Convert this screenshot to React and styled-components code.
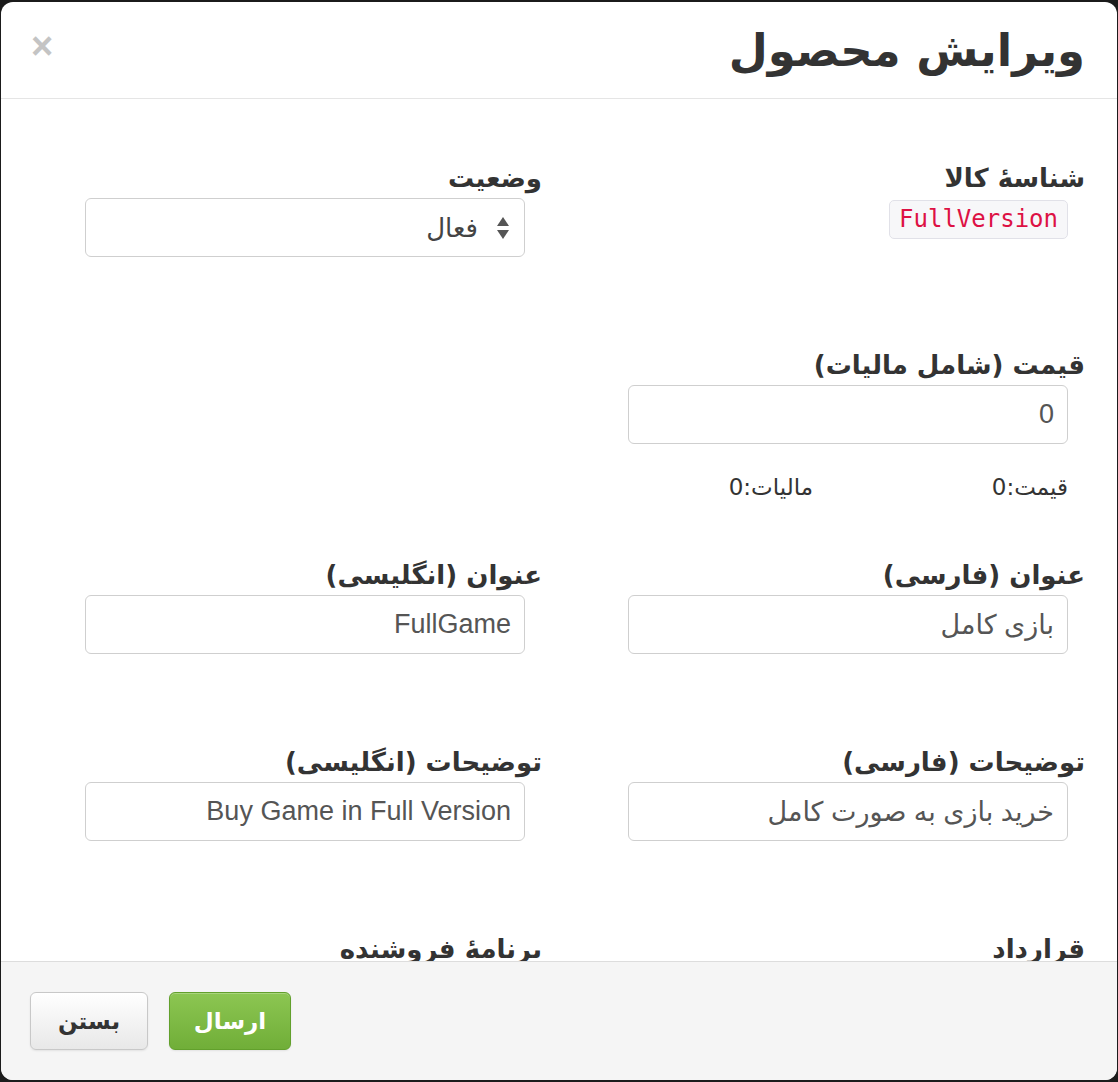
import styled, { createGlobalStyle } from "styled-components";

const GlobalStyle = createGlobalStyle`
  html, body {
    margin: 0;
    padding: 0;
    height: 1082px;
    overflow: hidden;
    background: #1b1b1b;
  }
  * {
    box-sizing: border-box;
  }
`;

const Modal = styled.div`
  margin: 2px 1px;
  height: 1078px;
  display: flex;
  flex-direction: column;
  background: #fff;
  border-radius: 12px;
  overflow: hidden;
  direction: rtl;
  font-family: "DejaVu Sans", sans-serif;
  color: #333;
`;

const Header = styled.div`
  height: 97px;
  flex-shrink: 0;
  display: flex;
  align-items: center;
  justify-content: space-between;
  padding: 0 32px 0 30px;
  border-bottom: 1px solid #e5e5e5;
`;

const Title = styled.h3`
  margin: 0;
  font-size: 45px;
  font-weight: bold;
  color: #333;
  line-height: 1;
`;

const Close = styled.span`
  font-family: "Liberation Sans", sans-serif;
  font-size: 38px;
  font-weight: bold;
  color: #c4c4c4;
  line-height: 1;
  margin-top: -8px;
`;

const Body = styled.div`
  flex: 1;
  overflow: hidden;
  padding: 64px 32px 0 0;
`;

const Row = styled.div`
  display: grid;
  grid-template-columns: 543px 542px;
  margin-bottom: ${(p) => p.$gap}px;
`;

const Field = styled.div`
  display: flex;
  flex-direction: column;
  align-items: flex-start;
`;

const Label = styled.label`
  font-size: 26px;
  font-weight: bold;
  line-height: 30px;
  margin-bottom: 5px;
`;

const Content = styled.div`
  margin-right: 17px;
  width: 440px;
`;

const Code = styled.code`
  display: inline-block;
  margin-top: 2px;
  padding: 0 9px;
  height: 39px;
  line-height: 37px;
  font-family: "DejaVu Sans Mono", monospace;
  font-size: 24px;
  color: #d14;
  background: #f7f7f9;
  border: 1px solid #e1e1e8;
  border-radius: 5px;
  direction: ltr;
`;

const Input = styled.div`
  height: 59px;
  width: 440px;
  display: flex;
  align-items: center;
  padding: 0 13px;
  border: 1.5px solid #cfcfcf;
  border-radius: 6px;
  font-family: "Liberation Sans", "DejaVu Sans", sans-serif;
  font-size: 27px;
  color: #555;
  background: #fff;
`;

const Select = styled(Input)`
  gap: 18px;
  padding-right: 14px;
  font-family: "DejaVu Sans", sans-serif;
  font-size: 26px;
  color: #444;
`;

const Help = styled.div`
  display: flex;
  margin-top: 28px;
  font-family: "DejaVu Sans", sans-serif;
  font-size: 23px;
  line-height: 30px;
  color: #333;
`;

const HelpItem = styled.span`
  width: ${(p) => p.$w || "auto"};
`;

const Footer = styled.div`
  height: 119px;
  flex-shrink: 0;
  display: flex;
  align-items: center;
  justify-content: flex-end;
  gap: 21px;
  padding: 0 29px 0 29px;
  background: #f5f5f5;
  border-top: 1px solid #ddd;
`;

const Button = styled.button`
  height: 58px;
  width: ${(p) => p.$w}px;
  border-radius: 6px;
  font-family: "DejaVu Sans", sans-serif;
  font-size: 23px;
  font-weight: bold;
  cursor: pointer;
  color: ${(p) => (p.$primary ? "#fff" : "#333")};
  border: 1px solid ${(p) => (p.$primary ? "#62a02c" : "#c8c8c8")};
  background: ${(p) =>
    p.$primary
      ? "linear-gradient(#8cc652, #70ae38)"
      : "linear-gradient(#ffffff, #e8e8e8)"};
  box-shadow: inset 0 1px 0 rgba(255, 255, 255, 0.25), 0 1px 2px rgba(0, 0, 0, 0.08);
`;

const Arrows = () => (
  <svg width="14" height="24" viewBox="0 0 14 24">
    <path d="M7 1 L13 10 L1 10 Z" fill="#555" />
    <path d="M7 23 L13 14 L1 14 Z" fill="#555" />
  </svg>
);

const App = () => {
  return (
    <>
      <GlobalStyle />
      <Modal>
        <Header>
          <Title>ویرایش محصول</Title>
          <Close>×</Close>
        </Header>
        <Body>
          <Row $gap={93}>
            <Field>
              <Label>شناسهٔ کالا</Label>
              <Content>
                <Code>FullVersion</Code>
              </Content>
            </Field>
            <Field>
              <Label>وضعیت</Label>
              <Content>
                <Select>
                  <Arrows />
                  <span>فعال</span>
                </Select>
              </Content>
            </Field>
          </Row>
          <Row $gap={58}>
            <Field>
              <Label>قیمت (شامل مالیات)</Label>
              <Content>
                <Input>0</Input>
                <Help>
                  <HelpItem $w="255px">قیمت:0</HelpItem>
                  <HelpItem>مالیات:0</HelpItem>
                </Help>
              </Content>
            </Field>
            <Field />
          </Row>
          <Row $gap={93}>
            <Field>
              <Label>عنوان (فارسی)</Label>
              <Content>
                <Input>بازی کامل</Input>
              </Content>
            </Field>
            <Field>
              <Label>عنوان (انگلیسی)</Label>
              <Content>
                <Input>FullGame</Input>
              </Content>
            </Field>
          </Row>
          <Row $gap={93}>
            <Field>
              <Label>توضیحات (فارسی)</Label>
              <Content>
                <Input>خرید بازی به صورت کامل</Input>
              </Content>
            </Field>
            <Field>
              <Label>توضیحات (انگلیسی)</Label>
              <Content>
                <Input>Buy Game in Full Version</Input>
              </Content>
            </Field>
          </Row>
          <Row $gap={0}>
            <Field>
              <Label>قرارداد</Label>
            </Field>
            <Field>
              <Label>برنامهٔ فروشنده</Label>
            </Field>
          </Row>
        </Body>
        <Footer>
          <Button $primary $w={122}>ارسال</Button>
          <Button $w={118}>بستن</Button>
        </Footer>
      </Modal>
    </>
  );
};

export default App;
